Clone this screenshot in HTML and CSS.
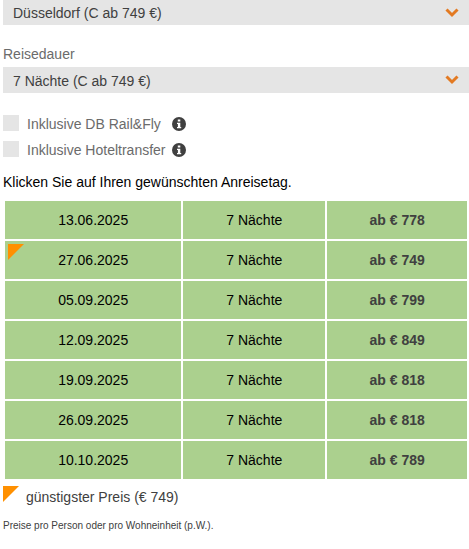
FILE: index.html
```html
<!DOCTYPE html>
<html lang="de">
<head>
<meta charset="utf-8">
<meta name="viewport" content="width=device-width, initial-scale=1">
<title>Reisetermine</title>
<link rel="stylesheet" href="styles.css">
</head>
<body>
<main class="booking">
  <div class="select-box">
    <select class="select select-first" aria-label="Abflughafen"><option>Düsseldorf (C ab 749 €)</option></select>
    <svg class="chevron" viewBox="0 0 14 10" aria-hidden="true"><path d="M1.500 1.500 7 7l5.500-5.500"/></svg>
  </div>

  <label class="label" for="duration">Reisedauer</label>
  <div class="select-box">
    <select class="select" id="duration"><option>7 Nächte (C ab 749 €)</option></select>
    <svg class="chevron" viewBox="0 0 14 10" aria-hidden="true"><path d="M1.500 1.500 7 7l5.500-5.500"/></svg>
  </div>

  <div class="extras">
    <div class="extra">
      <input class="check" type="checkbox" id="rail">
      <label class="extra-label" for="rail">Inklusive DB Rail&amp;Fly</label>
      <svg class="info" viewBox="0 0 14 14" aria-hidden="true"><circle cx="7" cy="7" r="7"/><path d="M5.800 2.600h2.500v2H5.800zM5 5.700h3.300v4.200h.9v1.300H5V9.900h.9V7H5z"/></svg>
    </div>
    <div class="extra">
      <input class="check" type="checkbox" id="transfer">
      <label class="extra-label" for="transfer">Inklusive Hoteltransfer</label>
      <svg class="info" viewBox="0 0 14 14" aria-hidden="true"><circle cx="7" cy="7" r="7"/><path d="M5.800 2.600h2.500v2H5.800zM5 5.700h3.300v4.200h.9v1.300H5V9.900h.9V7H5z"/></svg>
    </div>
  </div>

  <p class="hint">Klicken Sie auf Ihren gewünschten Anreisetag.</p>

  <table class="dates">
    <colgroup><col class="col-date"><col class="col-nights"><col class="col-price"></colgroup>
    <tbody>
      <tr><td>13.06.2025</td><td>7 Nächte</td><td class="price">ab € 778</td></tr>
      <tr><td class="best">27.06.2025</td><td>7 Nächte</td><td class="price">ab € 749</td></tr>
      <tr><td>05.09.2025</td><td>7 Nächte</td><td class="price">ab € 799</td></tr>
      <tr><td>12.09.2025</td><td>7 Nächte</td><td class="price">ab € 849</td></tr>
      <tr><td>19.09.2025</td><td>7 Nächte</td><td class="price">ab € 818</td></tr>
      <tr><td>26.09.2025</td><td>7 Nächte</td><td class="price">ab € 818</td></tr>
      <tr><td>10.10.2025</td><td>7 Nächte</td><td class="price">ab € 789</td></tr>
    </tbody>
  </table>

  <div class="legend"><span class="corner"></span><span>günstigster Preis (€ 749)</span></div>
  <p class="note">Preise pro Person oder pro Wohneinheit (p.W.).</p>
</main>
</body>
</html>
```
FILE: styles.css
```css
* { box-sizing: border-box; }

body {
  margin: 0;
  background: #fff;
  color: #000;
  font: 14px/18px "Liberation Sans", Arial, sans-serif;
}

.booking { padding-left: 3px; }

.select-box { display: grid; align-items: center; }

.select {
  grid-area: 1 / 1;
  width: 100%;
  height: 26px;
  padding: 1px 40px 0 10px;
  border: 0;
  border-radius: 0;
  appearance: none;
  background: #e5e5e5;
  color: #404040;
  font: inherit;
}

.select-first { height: 25px; }

.chevron {
  grid-area: 1 / 1;
  justify-self: end;
  width: 14px;
  height: 10px;
  margin-right: 10px;
  pointer-events: none;
  fill: none;
  stroke: #e37a22;
  stroke-width: 3;
}

.label {
  display: block;
  padding: 20px 0 4px;
  color: #6b6b6b;
}

.extras {
  display: grid;
  gap: 8px;
  padding-top: 22px;
}

.extra { display: flex; align-items: flex-start; }

.check {
  width: 16px;
  height: 16px;
  margin: 0;
  appearance: none;
  background: #e5e5e5;
}

.extra-label {
  width: 145px;
  padding-left: 8px;
  white-space: nowrap;
  color: #6b6b6b;
}

.info {
  width: 14px;
  height: 14px;
  margin: 2px 0 0 8px;
  fill: #404040;
}

.info path { fill: #fff; }

.hint { margin: 14px 0 8px; }

.dates {
  width: 100%;
  table-layout: fixed;
  border-collapse: separate;
  border-spacing: 2px;
}

.col-date { width: 38.5%; }
.col-nights { width: 31%; }
.col-price { width: 30.5%; }

.dates td {
  height: 38px;
  padding: 0;
  background: #abd08e;
  text-align: center;
}

.dates .price { color: #404040; font-weight: bold; }

.dates .best { position: relative; }

.corner,
.best::before {
  width: 16px;
  height: 16px;
  background: #ff9000;
  clip-path: polygon(0 0, 100% 0, 0 100%);
}

.best::before {
  content: "";
  position: absolute;
  top: 3px;
  left: 3px;
}

.legend {
  display: flex;
  gap: 7px;
  padding-top: 5px;
  color: #404040;
}

.legend span:last-child { padding-top: 2px; }

.note {
  margin: 13px 0 0;
  color: #404040;
  font-size: 10px;
  line-height: 14px;
}
```
